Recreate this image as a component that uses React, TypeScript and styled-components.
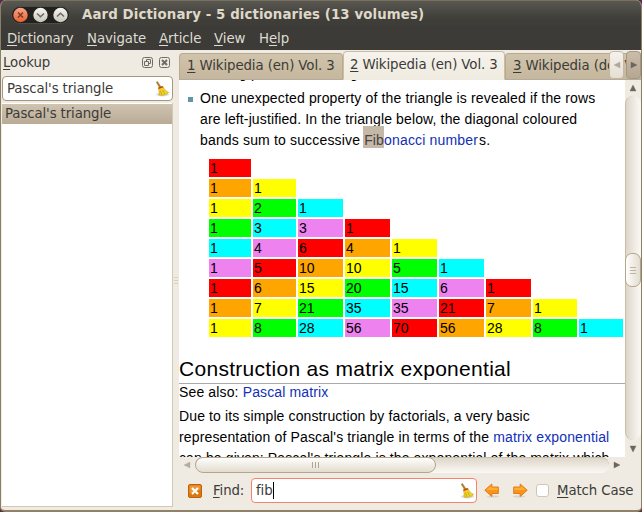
import React from "react";
import styled, { createGlobalStyle } from "styled-components";

const Global = createGlobalStyle`
  * { box-sizing: border-box; }
  body { margin: 0; background: #5b2a45; overflow: hidden; }
  svg { display: block; flex: none; }
`;

const Window = styled.div`
  width: 642px;
  height: 512px;
  display: flex;
  flex-direction: column;
  border: 1px solid #8b7f68;
  border-top: 0;
  border-bottom: 2px solid #8f8269;
  border-radius: 6px 6px 5px 5px;
  overflow: hidden;
  background: #efebe3;
  color: #3c3b37;
  font: 13.33px/16px "DejaVu Sans", sans-serif;
  letter-spacing: -0.11px;
  white-space: pre;
`;

const TitleBar = styled.header`
  height: 28px;
  flex: none;
  display: flex;
  align-items: center;
  padding-left: 10px;
  border-top: 1px solid #77725f;
  background: linear-gradient(#5a5851, #403f3a 60%, #3c3b37);
`;

const Title = styled.h1`
  margin: 0 0 0 12px;
  font: bold 13.33px/16px "DejaVu Sans", sans-serif;
  letter-spacing: 0.1px;
  color: #dfd8c8;
`;

const MenuBar = styled.nav`
  height: 22px;
  flex: none;
  display: flex;
  padding: 3px 0 0 6px;
  background: #3c3b37;
  color: #dfdbd2;
`;

const MenuItem = styled.span<{ $w: number; $ls?: number }>`
  width: ${(p) => p.$w}px;
  letter-spacing: ${(p) => p.$ls ?? -0.07}px;
`;

const Key = styled.span`
  text-decoration: underline;
  text-underline-offset: 2px;
  text-decoration-thickness: 1px;
`;

const Body = styled.main`
  flex: 1;
  min-height: 0;
  display: flex;
`;

const Side = styled.aside`
  width: 172px;
  flex: none;
  display: flex;
  flex-direction: column;
`;

const SideHead = styled.div`
  height: 26px;
  display: flex;
  align-items: center;
  padding: 0 3px 0 2px;
`;

const DockButtons = styled.div`
  display: flex;
  gap: 6px;
  margin: 0 0 1px auto;
`;

const SearchBox = styled.div`
  height: 25px;
  margin-left: 1px;
  display: flex;
  align-items: center;
  justify-content: space-between;
  padding: 0 2px 0 4px;
  border: 1px solid #a5977c;
  border-radius: 4px;
  background: #fff;
`;

const List = styled.div`
  height: 404px;
  margin: 2px 0 0 1px;
  padding-top: 1px;
  border: solid #d2c9b5;
  border-width: 0 1px 1px 0;
  background: #fff;
`;

const ListItem = styled.div`
  height: 20px;
  padding: 2px 0 0 3px;
  background: linear-gradient(#cfc3b1, #b9ab96);
`;

const Splitter = styled.div`
  width: 6px;
  flex: none;
  display: flex;
  flex-direction: column;
  justify-content: center;
  align-items: center;
  gap: 2px;
`;

const Notch = styled.i`
  width: 4px;
  height: 1px;
  background: #d6cfc2;
`;

const Pane = styled.section`
  flex: 1;
  min-width: 0;
  display: flex;
  flex-direction: column;
`;

const TabBar = styled.div`
  position: relative;
  height: 30px;
  flex: none;
  display: flex;
  align-items: flex-end;
  overflow: hidden;
`;

const Tab = styled.div<{ $w: number; $active?: boolean }>`
  width: ${(p) => p.$w}px;
  height: ${(p) => (p.$active ? 29 : 27)}px;
  flex: none;
  padding: ${(p) => (p.$active ? "5px 0 0 6px" : "4px 0 0 7px")};
  border: 1px solid ${(p) => (p.$active ? "#c9bda5" : "#baa98d")};
  border-bottom-color: ${(p) => (p.$active ? "#f0ece2" : "#b5ab9c")};
  border-radius: 4px 4px 0 0;
  background: ${(p) => (p.$active ? "linear-gradient(#f6f3ed, #efebe0)" : "linear-gradient(#d0c4ac, #c5b79d)")};
`;

const TabScroll = styled.div`
  position: absolute;
  right: 0;
  top: 1px;
  display: flex;
  gap: 2px;
`;

const TabArrow = styled.div<{ $dark?: boolean }>`
  width: 15px;
  height: 28px;
  display: grid;
  place-items: center;
  border: 1px solid ${(p) => (p.$dark ? "#a69780" : "#c4b8a4")};
  border-radius: 4px;
  background: ${(p) => (p.$dark ? "linear-gradient(#c9bca9, #b6a792)" : "linear-gradient(#f5f2ed, #e5dfd3)")};
`;

const Viewer = styled.div`
  height: 377px;
  flex: none;
  display: flex;
`;

const Article = styled.article`
  width: 446px;
  flex: none;
  overflow: hidden;
  background: #fff;
  color: #000;
  font: 14px/21px "Liberation Sans", Arial, sans-serif;
`;

const Item = styled.div<{ $gap: number }>`
  display: flex;
  margin-top: ${(p) => p.$gap}px;
`;

const Bullet = styled.i`
  width: 5px;
  height: 5px;
  margin: 9px 7px 0 9px;
  background: #6394a8;
`;

const Line = styled.div<{ $ls?: number; $h?: number; $gap?: number }>`
  height: ${(p) => p.$h ?? 21}px;
  line-height: ${(p) => p.$h ?? 21}px;
  margin-top: ${(p) => p.$gap ?? 0}px;
  letter-spacing: ${(p) => p.$ls ?? 0.12}px;
`;

const Link = styled.a`
  color: #1130b8;
`;

const Found = styled.mark`
  padding: 6px 0 0 1px;
  margin-left: -1px;
  background: #c5b8a7;
  color: #45433f;
`;

const Tail = styled.span`
  margin-left: 1px;
`;

const Triangle = styled.div`
  margin: 8px 0 0 30px;
  display: flex;
  flex-direction: column;
  gap: 2px;
`;

const TriangleRow = styled.div`
  display: grid;
  grid-template-columns: 42px 43px 45px 45px 45px 45px 45px 44px 44px;
  column-gap: 2px;
`;

const Cell = styled.div<{ $bg: string }>`
  height: 18px;
  padding: 1px 0 0 1px;
  line-height: 16px;
  letter-spacing: 0;
  background: ${(p) => p.$bg};
`;

const Heading = styled.h2`
  height: 27px;
  margin: 20px 0 0;
  border-bottom: 1px solid #aaa;
  font: 21px/24px "Liberation Sans", Arial, sans-serif;
  letter-spacing: 0.29px;
`;

const VBar = styled.div`
  width: 16px;
  flex: none;
  display: flex;
  flex-direction: column;
  align-items: center;
`;

const VGroove = styled.div`
  width: 16px;
  height: 344px;
  padding-top: 157px;
  border-left: 1px solid #c9bda9;
  border-radius: 8px;
  background: linear-gradient(90deg, #ddd6c9, #f3efe9 70%, #fbf9f5);
`;

const VHandle = styled.div`
  width: 16px;
  height: 34px;
  margin-left: -1px;
  display: flex;
  flex-direction: column;
  justify-content: center;
  align-items: center;
  gap: 2px;
  border: 1px solid #b4a68c;
  border-radius: 7px;
  background: linear-gradient(90deg, #fefefd, #e3dccf);
`;

const VGrip = styled.i`
  width: 6px;
  height: 1px;
  background: #c0b49d;
`;

const ArrowSlot = styled.div<{ $w: number; $h: number }>`
  width: ${(p) => p.$w}px;
  height: ${(p) => p.$h}px;
  flex: none;
  display: grid;
  place-items: center;
`;

const HBar = styled.div`
  height: 16px;
  flex: none;
  display: flex;
`;

const HGroove = styled.div`
  width: 414px;
  height: 16px;
  border-top: 1px solid #c9bda9;
  border-radius: 8px;
  background: linear-gradient(#ddd6c9, #f3efe9 70%, #faf8f4);
`;

const HHandle = styled.div`
  width: 241px;
  height: 16px;
  margin-top: -1px;
  display: flex;
  justify-content: center;
  align-items: center;
  gap: 2px;
  border: 1px solid #b4a68c;
  border-radius: 8px;
  background: linear-gradient(#fefefd, #e3dccf);
`;

const HGrip = styled.i`
  width: 1px;
  height: 6px;
  background: #b3a68e;
`;

const FindBar = styled.form`
  flex: 1;
  display: flex;
  align-items: center;
  padding: 0 0 2px 9px;
`;

const FindLabel = styled.span`
  width: 38px;
  margin-left: 11px;
`;

const FindBox = styled.div`
  width: 226px;
  height: 25px;
  display: flex;
  align-items: center;
  padding: 0 1px 0 4px;
  border: 1px solid #f4826c;
  border-radius: 4px;
  background: #fff;
`;

const Caret = styled.i`
  width: 1px;
  height: 17px;
  margin-right: auto;
  background: #000;
`;

const FindArrows = styled.div`
  display: flex;
  gap: 12px;
  margin-left: 7px;
`;

const CheckBox = styled.span`
  width: 13px;
  height: 13px;
  margin: 0 8px;
  border: 1px solid #d0c6b6;
  border-radius: 3px;
  background: #fff;
`;

const Broom = () => (
  <svg width="16" height="16" viewBox="0 0 16 16">
    <ellipse cx="8.5" cy="13.6" rx="6.5" ry="1.8" fill="#ddd" />
    <path d="M2.3 1.2 3.5.6 7 6 5.6 6.8z" fill="#b9801f" stroke="#94661a" strokeWidth=".5" />
    <path d="M4.4 6.9 9 5.4C10.2 8.7 12 10 14.6 11.4 12.4 13.6 9 15 5 14 5.3 11.5 5 9 4.4 6.9z" fill="#efd428" stroke="#bf9a14" strokeWidth=".6" />
    <path d="M6.5 9.5 7.6 13.6M8.6 8.9 10.6 12.8" stroke="#bb9412" strokeWidth=".7" />
    <path d="M4.3 6.6 8.6 5.1 9 6.4 4.7 7.9z" fill="#cf3a24" />
  </svg>
);

const Tri = ({ d, fill }: { d: "l" | "r" | "u" | "d"; fill: string }) => {
  const paths = { l: "M7 1v6L1 4z", r: "M1 1v6l6-3z", u: "M1 7h6L4 1z", d: "M1 1h6L4 7z" };
  return (
    <svg width="8" height="8">
      <path d={paths[d]} fill={fill} stroke={fill} strokeWidth=".4" />
    </svg>
  );
};

const WindowButtons = () => (
  <svg width="59" height="18" viewBox="0 0 59 18">
    <defs>
      <linearGradient id="close" x2="0" y2="1">
        <stop stopColor="#f9a58a" />
        <stop offset="1" stopColor="#e9602f" />
      </linearGradient>
      <linearGradient id="plain" x2="0" y2="1">
        <stop stopColor="#f7f6f2" />
        <stop offset="1" stopColor="#c8c5ba" />
      </linearGradient>
    </defs>
    <rect x=".5" y=".5" width="58" height="17" rx="8.5" fill="#22211e" stroke="#4e4c46" />
    <circle cx="9.5" cy="9" r="7.2" fill="url(#close)" />
    <circle cx="29.5" cy="9" r="7.2" fill="url(#plain)" />
    <circle cx="49.5" cy="9" r="7.2" fill="url(#plain)" />
    <g fill="none" stroke="#6b675e" strokeWidth="1.5">
      <path d="M7 6.5l5 5M12 6.5l-5 5" stroke="#7a3a24" />
      <path d="M26 7.5l3.5 3.2L33 7.5" />
      <path d="M46 10.5l3.5-3.2 3.5 3.2" />
    </g>
  </svg>
);

const OrangeArrow = ({ right }: { right?: boolean }) => (
  <svg width="16" height="15" viewBox="0 0 16 15">
    <g transform={right ? "matrix(-1 0 0 1 16 0)" : undefined}>
      <ellipse cx="9" cy="13.5" rx="6" ry="1" fill="#d8d2c8" />
      <path d="M.8 7.2 7.8 1v3h6.5v6.500H7.8v3z" fill="#fb9318" stroke="#e27a1c" strokeWidth="1" strokeLinejoin="round" />
      <path d="M2.4 7 7.200 2.700v2h6.500V7z" fill="#ffae35" />
    </g>
  </svg>
);

const COLORS = ["#ff0000", "#ffa500", "#ffff00", "#00ff00", "#00ffff", "#ee82ee"];

const ROWS: number[][] = Array.from({ length: 9 }).reduce<number[][]>((rows) => {
  const last = rows[rows.length - 1] ?? [];
  return [...rows, last.length ? [1, ...last.slice(1).map((v, i) => v + last[i]), 1] : [1]];
}, []);

export default function App() {
  return (
    <>
      <Global />
      <Window>
        <TitleBar>
          <WindowButtons />
          <Title>Aard Dictionary - 5 dictionaries (13 volumes)</Title>
        </TitleBar>
        <MenuBar>
          <MenuItem $w={80} $ls={-0.2}><Key>D</Key>ictionary</MenuItem>
          <MenuItem $w={72}><Key>N</Key>avigate</MenuItem>
          <MenuItem $w={55}><Key>A</Key>rticle</MenuItem>
          <MenuItem $w={45}><Key>V</Key>iew</MenuItem>
          <MenuItem $w={40}>H<Key>e</Key>lp</MenuItem>
        </MenuBar>
        <Body>
          <Side>
            <SideHead>
              <span><Key>L</Key>ookup</span>
              <DockButtons>
                <svg width="11" height="11" fill="none" stroke="#6f6c65">
                  <rect x=".5" y=".5" width="10" height="10" rx="2" />
                  <path d="M4.5 4.5v-2h4v4h-2M2.5 4.5h4v4h-4z" />
                </svg>
                <svg width="11" height="11" fill="none" stroke="#6f6c65">
                  <rect x=".5" y=".5" width="10" height="10" rx="2" />
                  <path d="M3 3l5 5M8 3l-5 5" strokeWidth="2" />
                </svg>
              </DockButtons>
            </SideHead>
            <SearchBox>Pascal's triangle<Broom /></SearchBox>
            <List><ListItem>Pascal's triangle</ListItem></List>
          </Side>
          <Splitter><Notch /><Notch /><Notch /></Splitter>
          <Pane>
            <TabBar>
              <Tab $w={164}><Key>1</Key> Wikipedia (en) Vol. 3</Tab>
              <Tab $w={162} $active><Key>2</Key> Wikipedia (en) Vol. 3</Tab>
              <Tab $w={162}><Key>3</Key> Wikipedia (de) Vol. 1</Tab>
              <TabScroll>
                <TabArrow><Tri d="l" fill="#b0a899" /></TabArrow>
                <TabArrow $dark><Tri d="r" fill="#6b665d" /></TabArrow>
              </TabScroll>
            </TabBar>
            <Viewer>
              <Article>
                <Item $gap={-17}>
                  <Bullet />
                  <Line>starting position as being</Line>
                </Item>
                <Item $gap={4}>
                  <Bullet />
                  <div>
                    <Line $ls={0.15}>One unexpected property of the triangle is revealed if the rows</Line>
                    <Line $ls={0.13}>are left-justified. In the triangle below, the diagonal coloured</Line>
                    <Line $ls={0.16}>bands sum to successive <Link><Found>Fib</Found>onacci number</Link><Tail>s.</Tail></Line>
                  </div>
                </Item>
                <Triangle>
                  {ROWS.map((row, r) => (
                    <TriangleRow key={r}>
                      {row.map((v, c) => (
                        <Cell key={c} $bg={COLORS[(r + c) % 6]}>{v}</Cell>
                      ))}
                    </TriangleRow>
                  ))}
                </Triangle>
                <Heading>Construction as matrix exponential</Heading>
                <Line $h={17} $ls={0.14}>See also: <Link>Pascal matrix</Link></Line>
                <Line $gap={5}>Due to its simple construction by factorials, a very basic</Line>
                <Line $ls={0.14}>representation of Pascal's triangle in terms of the <Link>matrix exponential</Link></Line>
                <Line>can be given: Pascal's triangle is the exponential of the matrix which</Line>
              </Article>
              <VBar>
                <ArrowSlot $w={16} $h={16}><Tri d="u" fill="#6b665d" /></ArrowSlot>
                <VGroove><VHandle><VGrip /><VGrip /><VGrip /></VHandle></VGroove>
                <ArrowSlot $w={16} $h={17}><Tri d="d" fill="#6b665d" /></ArrowSlot>
              </VBar>
            </Viewer>
            <HBar>
              <ArrowSlot $w={16} $h={16}><Tri d="l" fill="#b5ac9d" /></ArrowSlot>
              <HGroove><HHandle><HGrip /><HGrip /><HGrip /></HHandle></HGroove>
              <ArrowSlot $w={16} $h={16}><Tri d="r" fill="#6b665d" /></ArrowSlot>
            </HBar>
            <FindBar>
              <svg width="14" height="14" viewBox="0 0 14 14">
                <rect x=".5" y=".5" width="13" height="13" rx="1.5" fill="#dd780f" stroke="#bd600b" />
                <path d="M1.5 1.5h11v4l-11 4z" fill="#ec9636" />
                <path d="M4 4l6 6M10 4l-6 6" stroke="#fff" strokeWidth="2.2" />
              </svg>
              <FindLabel><Key>F</Key>ind:</FindLabel>
              <FindBox>fib<Caret /><Broom /></FindBox>
              <FindArrows><OrangeArrow /><OrangeArrow right /></FindArrows>
              <CheckBox />
              <span><Key>M</Key>atch Case</span>
            </FindBar>
          </Pane>
        </Body>
      </Window>
    </>
  );
}
